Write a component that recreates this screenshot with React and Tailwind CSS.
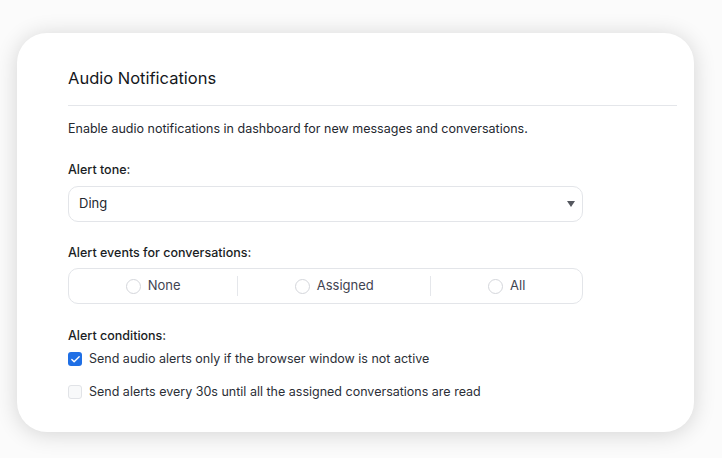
import { Check } from 'lucide-react';

function Radio({ label }) {
  return (
    <label className="flex flex-auto items-center justify-center gap-[7px] my-[7px] border-l border-[#e5e7eb] first:border-l-0 py-[3px]">
      <span className="w-[15px] h-[15px] rounded-full border border-[#d4d6db] bg-white" />
      <span className="text-[13px] text-[#3f4451]">{label}</span>
    </label>
  );
}

export default function App() {
  return (
    <div className="min-h-screen bg-[#fbfbfb] pt-[33px] pl-[17px] pr-[28px] pb-[26px]" style={{ fontFamily: 'Inter, "Noto Sans", sans-serif' }}>
      <div className="w-[677px] h-[399px] bg-white rounded-[30px] shadow-[0_2px_22px_rgba(0,0,0,0.16)] pl-[51px] pr-[17px] pt-[34px]">
        <h2 className="text-[16.5px] font-normal text-[#15171c] leading-[22px] pb-[16px] border-b border-[#e4e6ea]">
          Audio Notifications
        </h2>
        <p className="mt-[14px] text-[12.5px] text-[#24282f] leading-[18px]">
          Enable audio notifications in dashboard for new messages and conversations.
        </p>

        <div className="w-[515px]">
          <div className="mt-[23px] text-[12.5px] font-medium text-[#1a1d24] leading-[18px]">Alert tone:</div>
          <div className="mt-[7px] h-[36px] rounded-[10px] border border-[#e3e5e9] flex items-center justify-between pl-[10px] pr-[7px]">
            <span className="text-[13px] text-[#24282f]">Ding</span>
            <svg width="8" height="6" viewBox="0 0 8 6"><path d="M0 0h8L4 6z" fill="#55585f" /></svg>
          </div>

          <div className="mt-[22px] text-[12.5px] font-medium text-[#1a1d24] leading-[18px]">Alert events for conversations:</div>
          <div className="mt-[6px] h-[36px] rounded-[10px] border border-[#e3e5e9] flex items-stretch">
            <Radio label="None" />
            <Radio label="Assigned" />
            <Radio label="All" />
          </div>

          <div className="mt-[23px] text-[12.5px] font-medium text-[#1a1d24] leading-[18px]">Alert conditions:</div>
          <div className="mt-[5px] flex items-center gap-[7px]">
            <span className="w-[14px] h-[14px] rounded-[3px] bg-[#1f6fe5] flex items-center justify-center">
              <Check size={11} strokeWidth={3} color="white" />
            </span>
            <span className="text-[12.5px] text-[#2b2f37] leading-[18px]">Send audio alerts only if the browser window is not active</span>
          </div>
          <div className="mt-[15px] flex items-center gap-[7px]">
            <span className="w-[14px] h-[14px] rounded-[3px] border border-[#e1e3e7] bg-[#f8f9fa]" />
            <span className="text-[12.5px] text-[#2b2f37] leading-[18px]">Send alerts every 30s until all the assigned conversations are read</span>
          </div>
        </div>
      </div>
    </div>
  );
}
